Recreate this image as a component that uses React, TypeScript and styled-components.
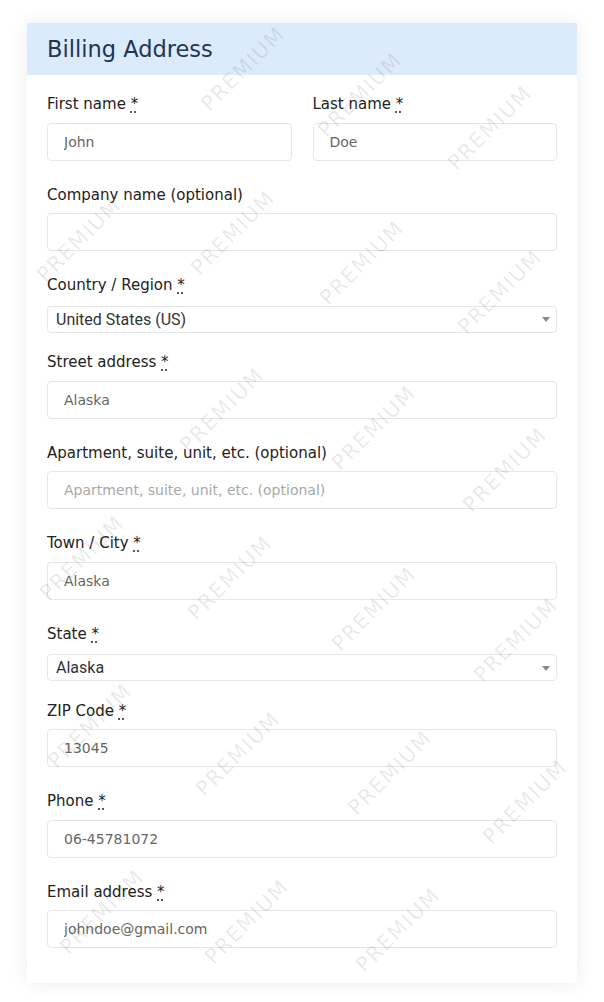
import React from "react";
import styled, { createGlobalStyle } from "styled-components";

const GlobalStyle = createGlobalStyle`
  html, body { margin: 0; padding: 0; background: #ffffff; }
  body { font-family: "DejaVu Sans", "Liberation Sans", sans-serif; }
  * { box-sizing: border-box; }
`;

const Page = styled.div`
  position: relative;
  width: 604px;
  min-height: 1002px;
  padding: 23px 27px 20px;
`;

const Card = styled.section`
  width: 550px;
  background: #ffffff;
  box-shadow: 0 0 18px rgba(0, 0, 0, 0.08);
`;

const Header = styled.header`
  height: 52px;
  display: flex;
  align-items: center;
  padding: 0 20px;
  background: #dcebfc;
`;

const Title = styled.h2`
  margin: 0;
  font-size: 22.5px;
  font-weight: 400;
  color: #1f3656;
`;

const Body = styled.div`
  padding: 17.2px 20px 12.5px;
`;

const Row = styled.div`
  display: grid;
  grid-template-columns: 1fr 1fr;
  column-gap: 21px;
`;

const Field = styled.div<{ $select?: boolean }>`
  display: flex;
  flex-direction: column;
  margin-bottom: ${(p) => (p.$select ? "17.5px" : "22px")};
`;

const Label = styled.label<{ $select?: boolean }>`
  font-size: 15px;
  line-height: 22px;
  padding-top: 1px;
  color: #222222;
  margin-bottom: ${(p) => (p.$select ? "9.5px" : "7.5px")};
`;

const Req = styled.abbr`
  text-decoration: underline dotted;
  text-underline-offset: 3px;
  color: #222222;
`;

const TextInput = styled.input`
  height: 38px;
  width: 100%;
  border: 1px solid #e6e6e6;
  border-radius: 4px;
  padding: 0 16px;
  font-family: "DejaVu Sans", "Liberation Sans", sans-serif;
  font-size: 14px;
  color: #666666;
  background: transparent;
  outline: none;
  &::placeholder { color: #a8a8a8; }
`;

const SelectBox = styled.div`
  height: 27px;
  display: flex;
  align-items: center;
  justify-content: space-between;
  border: 1px solid #e6e6e6;
  border-radius: 4px;
  padding: 0 6px 0 8px;
  font-family: Roboto, "Liberation Sans", sans-serif;
  font-size: 16px;
  color: #333333;
`;

const Arrow = styled.span`
  width: 0;
  height: 0;
  border-left: 4px solid transparent;
  border-right: 4px solid transparent;
  border-top: 5px solid #888888;
  margin-top: 1px;
`;

const Marks = styled.div`
  position: absolute;
  inset: 0;
  pointer-events: none;
  overflow: hidden;
`;

const Mark = styled.span`
  position: absolute;
  transform: translate(-50%, -50%) rotate(-45deg);
  font-family: "DejaVu Sans", sans-serif;
  font-size: 21px;
  font-weight: 400;
  color: rgba(0, 0, 0, 0.09);
  white-space: nowrap;
  letter-spacing: 1.5px;
`;

const marks: [number, number][] = [
  [243, 69], [360, 95], [490, 128],
  [79, 240], [233, 233], [362, 263], [500, 292],
  [222, 410], [374, 428], [505, 470],
  [82, 558], [230, 578], [374, 609], [516, 640],
  [90, 726], [238, 754], [390, 773], [525, 802],
  [102, 912], [247, 922], [398, 930],
];

type InputProps = { label: string; required?: boolean; value?: string; placeholder?: string };

const InputField = ({ label, required, value, placeholder }: InputProps) => (
  <Field>
    <Label>
      {label} {required && <Req title="required">*</Req>}
    </Label>
    <TextInput readOnly defaultValue={value} placeholder={placeholder} />
  </Field>
);

const SelectField = ({ label, value }: { label: string; value: string }) => (
  <Field $select>
    <Label $select>
      {label} <Req title="required">*</Req>
    </Label>
    <SelectBox>
      <span>{value}</span>
      <Arrow />
    </SelectBox>
  </Field>
);

export default function App() {
  return (
    <Page>
      <GlobalStyle />
      <Card>
        <Header>
          <Title>Billing Address</Title>
        </Header>
        <Body>
          <Row>
            <InputField label="First name" required value="John" />
            <InputField label="Last name" required value="Doe" />
          </Row>
          <InputField label="Company name (optional)" />
          <SelectField label="Country / Region" value="United States (US)" />
          <InputField label="Street address" required value="Alaska" />
          <InputField
            label="Apartment, suite, unit, etc. (optional)"
            placeholder="Apartment, suite, unit, etc. (optional)"
          />
          <InputField label="Town / City" required value="Alaska" />
          <SelectField label="State" value="Alaska" />
          <InputField label="ZIP Code" required value="13045" />
          <InputField label="Phone" required value="06-45781072" />
          <InputField label="Email address" required value="johndoe@gmail.com" />
        </Body>
      </Card>
      <Marks>
        {marks.map(([x, y], i) => (
          <Mark key={i} style={{ left: x, top: y }}>
            PREMIUM
          </Mark>
        ))}
      </Marks>
    </Page>
  );
}
